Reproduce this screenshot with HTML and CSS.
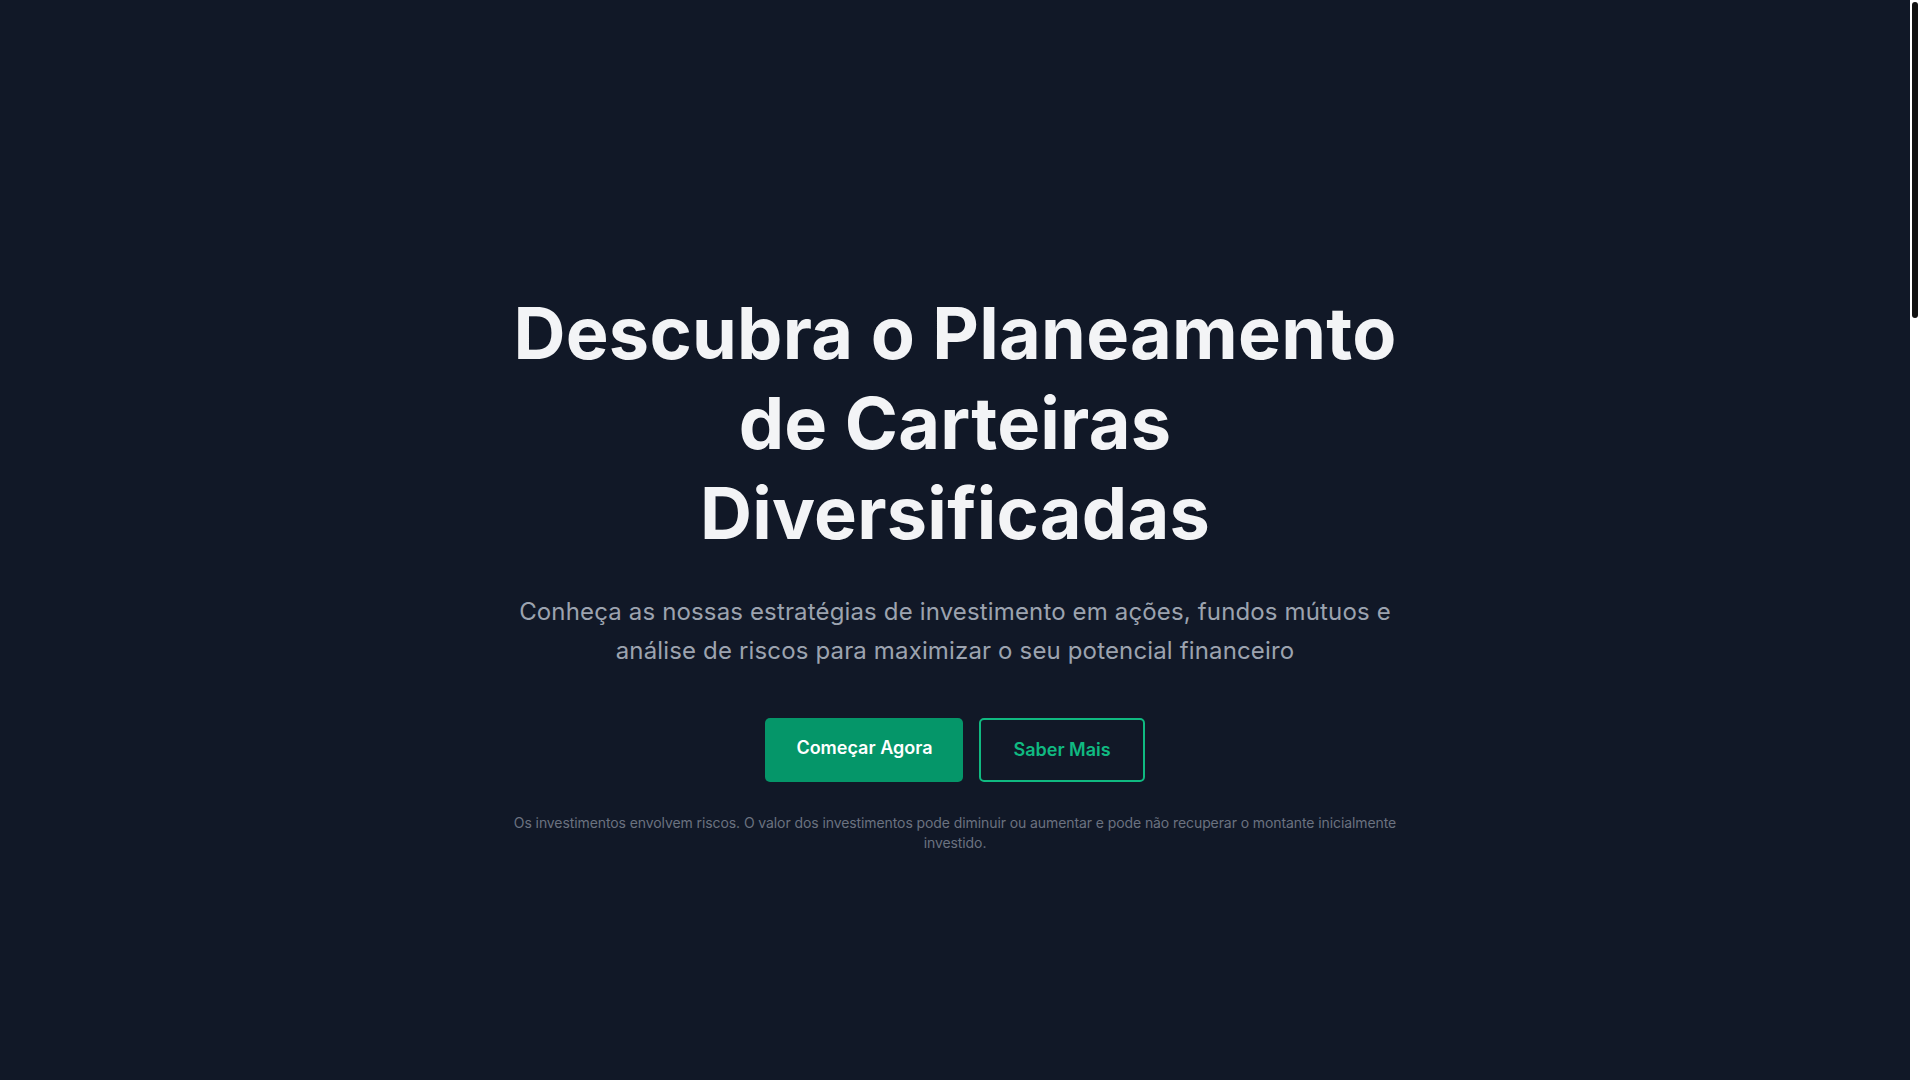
FILE: index.html
```html
<!DOCTYPE html>
<html lang="pt">
<head>
<meta charset="utf-8">
<title>Planeamento de Carteiras Diversificadas</title>
<link rel="stylesheet" href="styles.css">
</head>
<body>
<div class="frame">
  <main class="page">
    <section class="hero">
      <div class="hero-inner">
        <h1 class="hero-title">Descubra o Planeamento de Carteiras Diversificadas</h1>
        <p class="hero-sub">Conheça as nossas estratégias de investimento em ações, fundos mútuos e análise de riscos para maximizar o seu potencial financeiro</p>
        <div class="hero-actions">
          <a class="btn btn-primary" href="#">Começar Agora</a>
          <a class="btn btn-outline" href="#">Saber Mais</a>
        </div>
        <p class="hero-note">Os investimentos envolvem riscos. O valor dos investimentos pode diminuir ou aumentar e pode não recuperar o montante inicialmente investido.</p>
      </div>
    </section>
  </main>
  <div class="scrollbar" aria-hidden="true"><div class="scrollbar-thumb"></div></div>
</div>
</body>
</html>
```
FILE: styles.css
```css
html, body {
  margin: 0;
  height: 100%;
  overflow: hidden;
  background: #111827;
}
body {
  font-family: Inter, "Noto Sans", sans-serif;
  color: #f3f4f6;
}
.frame {
  display: flex;
  height: 1080px;
}
.page {
  flex: 1;
  min-width: 0;
  background: #111827;
}
.scrollbar {
  width: 10px;
  flex: none;
  background: #ffffff;
  padding: 2px 2px 0;
  box-sizing: border-box;
}
.scrollbar-thumb {
  height: 316px;
  background: #111111;
  border-radius: 3px;
}
.hero {
  box-sizing: border-box;
  padding-top: 288px;
}
.hero-inner {
  max-width: 896px;
  margin: 0 auto;
  text-align: center;
}
.hero-title {
  margin: 0;
  font-size: 72px;
  line-height: 90px;
  font-weight: 700;
  letter-spacing: 0.25px;
  color: #f3f4f6;
}
.hero-sub {
  margin: 34px 0 0;
  font-size: 24px;
  line-height: 39px;
  letter-spacing: 0.15px;
  color: #9ca3af;
}
.hero-actions {
  margin-top: 48px;
  display: flex;
  justify-content: center;
  gap: 16px;
}
.btn {
  display: block;
  font-size: 18px;
  line-height: 28px;
  font-weight: 600;
  text-decoration: none;
  border-radius: 5px;
}
.btn-primary {
  background: #059669;
  color: #ffffff;
  padding: 16px 31px 19px;
}
.btn-outline {
  color: #10b981;
  border: 2px solid #10b981;
  padding: 16px 32px;
}
.hero-note {
  margin: 31px 0 0;
  font-size: 14px;
  line-height: 20px;
  letter-spacing: -0.09px;
  color: #6b7280;
}
```
